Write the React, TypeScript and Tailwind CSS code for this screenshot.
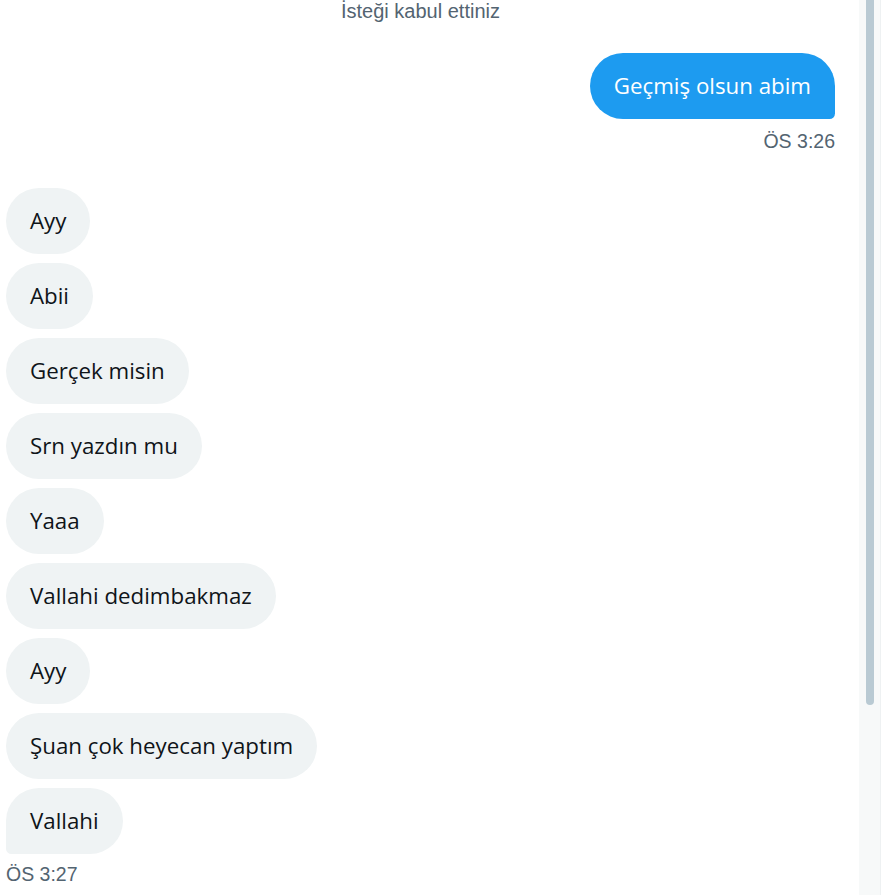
import React from "react";

const incoming = [
  "Ayy",
  "Abii",
  "Gerçek misin",
  "Srn yazdın mu",
  "Yaaa",
  "Vallahi dedimbakmaz",
  "Ayy",
  "Şuan çok heyecan yaptım",
  "Vallahi",
];

export default function App() {
  return (
    <div className="w-[895px] h-[895px] flex bg-white overflow-hidden">
      <div className="flex-1 flex flex-col pl-[6px] pr-[24px]">
        <div
          className="h-6 leading-[22px] text-center text-[20px] text-[#536471]"
          style={{ fontFamily: '"Liberation Sans", Arial, sans-serif' }}
        >
          İsteği kabul ettiniz
        </div>
        <div className="mt-[29px] flex flex-col items-end">
          <div
            className="bg-[#1d9bf0] text-white text-[22.3px] leading-[30px] px-6 py-[18px] rounded-[36px] rounded-br-[6px]"
            style={{ fontFamily: '"Open Sans", sans-serif' }}
          >
            Geçmiş olsun abim
          </div>
          <div
            className="mt-[10px] h-6 leading-6 text-[19.5px] text-[#536471]"
            style={{ fontFamily: '"Liberation Sans", Arial, sans-serif' }}
          >
            ÖS 3:26
          </div>
        </div>
        <div className="mt-[35px] flex flex-col items-start gap-[9px]">
          {incoming.map((t, i) => (
            <div
              key={i}
              className={
                i === incoming.length - 1
                  ? "bg-[#eff3f4] text-[#0f1419] text-[22.3px] leading-[30px] px-6 py-[18px] rounded-[36px] rounded-bl-[6px]"
                  : "bg-[#eff3f4] text-[#0f1419] text-[22.3px] leading-[30px] px-6 py-[18px] rounded-[36px]"
              }
              style={{ fontFamily: '"Open Sans", sans-serif' }}
            >
              {t}
            </div>
          ))}
        </div>
        <div
          className="mt-[8px] h-6 leading-6 text-[19.5px] text-[#536471]"
          style={{ fontFamily: '"Liberation Sans", Arial, sans-serif' }}
        >
          ÖS 3:27
        </div>
      </div>
      <div className="w-[22px] h-full bg-[#f7f9f9] border-r border-[#eef1f2] flex justify-center">
        <div className="w-2 h-[705px] bg-[#b9cad3] rounded-b-full" />
      </div>
      <div className="w-[14px] h-full bg-white" />
    </div>
  );
}
